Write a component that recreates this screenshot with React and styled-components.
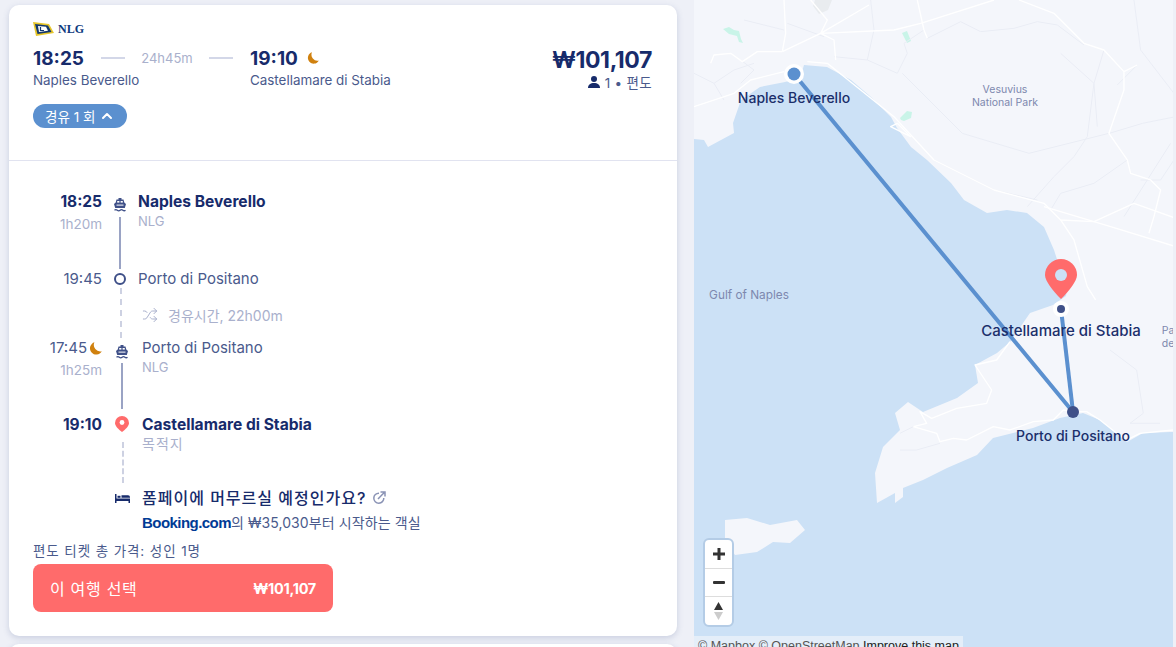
import styled, { createGlobalStyle } from "styled-components";
import { ChevronUp, Shuffle } from "lucide-react";

const GlobalStyle = createGlobalStyle`
  html, body {
    margin: 0;
    height: 100%;
    overflow: hidden;
    background: #eef0f7;
    font-family: Inter, "Noto Sans CJK KR", sans-serif;
  }
  * { box-sizing: border-box; }
`;

const Page = styled.div`
  display: flex;
  height: 647px;
  overflow: hidden;
`;
const Column = styled.div`
  width: 668px;
  margin-left: 9px;
  margin-right: 17px;
  padding-top: 5px;
  display: flex;
  flex-direction: column;
  gap: 8px;
  flex-shrink: 0;
`;
const Card = styled.div`
  background: #fff;
  border-radius: 10px;
  box-shadow: 0 2px 6px rgba(70, 85, 140, 0.22);
  flex-shrink: 0;
`;
const NextCard = styled(Card)`
  height: 60px;
`;
const Header = styled.div`
  height: 156px;
  padding: 16px 25px 0 24px;
  display: flex;
  justify-content: space-between;
  border-bottom: 1px solid #e1e3f0;
`;
const Operator = styled.div`
  display: flex;
  align-items: center;
  gap: 4px;
  height: 16px;
  color: #0d3a80;
  font: bold 12px "Liberation Serif", serif;
`;
const Route = styled.div`
  display: flex;
  margin-top: 11px;
`;
const RouteSide = styled.div`
  width: ${(p) => p.$width || "auto"};
`;
const TimeRow = styled.div`
  display: flex;
  align-items: center;
  height: 20px;
`;
const BigTime = styled.span`
  font-size: 19px;
  font-weight: 700;
  color: #172b6b;
  width: ${(p) => p.$width || "auto"};
`;
const Rule = styled.span`
  width: 24px;
  height: 2px;
  background: #d3d7e8;
`;
const Duration = styled.span`
  width: 84px;
  text-align: center;
  font-size: 13px;
  color: #a9b0cc;
`;
const Place = styled.div`
  font-size: 13.4px;
  line-height: 16px;
  margin-top: 4px;
  color: #4a5a8c;
`;
const Badge = styled.div`
  display: inline-flex;
  align-items: center;
  gap: 4px;
  height: 24px;
  margin-top: 16px;
  padding: 0 12px;
  border-radius: 12px;
  background: #5b90cf;
  color: #fff;
  font-size: 13.5px;
`;
const PriceBox = styled.div`
  margin-top: 25px;
  text-align: right;
`;
const Price = styled.div`
  font-size: 23px;
  line-height: 28px;
  font-weight: 700;
  letter-spacing: -0.4px;
  color: #172b6b;
`;
const PriceMeta = styled.div`
  display: flex;
  justify-content: flex-end;
  align-items: center;
  gap: 5px;
  height: 16px;
  font-size: 13.5px;
  letter-spacing: 0.3px;
  color: #4a5a8c;
`;
const Details = styled.div`
  padding: 31px 24px 24px;
`;
const Stop = styled.div`
  display: grid;
  grid-template-columns: 69px ${(p) => p.$rail}px 1fr;
  height: ${(p) => p.$height}px;
  padding-top: ${(p) => p.$top || 0}px;
`;
const TimeCell = styled.div`
  text-align: right;
`;
const Clock = styled.div`
  display: flex;
  justify-content: flex-end;
  align-items: center;
  gap: 2px;
  font-size: ${(p) => (p.$strong ? 15.5 : 15)}px;
  line-height: 20px;
  font-weight: ${(p) => (p.$strong ? 700 : 400)};
  color: ${(p) => (p.$strong ? "#172b6b" : "#4a5a8c")};
`;
const Leg = styled.div`
  margin-top: 3px;
  font-size: 13.5px;
  line-height: 18px;
  color: #a9b0cc;
`;
const Rail = styled.div`
  display: flex;
  flex-direction: column;
  align-items: center;
  padding-top: ${(p) => p.$top || 0}px;
`;
const Solid = styled.div`
  flex: 1;
  width: 2px;
  margin-top: ${(p) => p.$gap}px;
  background: #9aa3c4;
`;
const Dashed = styled.div`
  flex: 1;
  margin-top: ${(p) => p.$gap || 0}px;
  margin-left: 1px;
  border-left: 2px dashed #cdd1e2;
`;
const Ring = styled.div`
  width: 12px;
  height: 12px;
  border-radius: 50%;
  border: 2px solid #3f5088;
`;
const Title = styled.div`
  font-size: ${(p) => (p.$strong ? 15.6 : 15)}px;
  line-height: 20px;
  font-weight: ${(p) => (p.$strong ? 700 : 400)};
  color: ${(p) => (p.$strong ? "#172b6b" : "#4a5a8c")};
`;
const Note = styled.div`
  font-size: ${(p) => p.$size || 13}px;
  line-height: 18px;
  letter-spacing: ${(p) => p.$spacing || 0}px;
  color: #a9b0cc;
`;
const Layover = styled.div`
  display: flex;
  align-items: center;
  gap: 10px;
  height: 20px;
  margin-top: 17px;
  padding-left: 4px;
  font-size: 14px;
  color: #a9b0cc;
`;
const Hotel = styled.div`
  display: grid;
  grid-template-columns: 69px 40px 1fr;
  margin-top: 5px;
`;
const BedCell = styled.div`
  display: flex;
  justify-content: center;
  padding-top: 6px;
`;
const HotelTitle = styled.div`
  display: flex;
  align-items: center;
  gap: 6px;
  font-size: 16px;
  line-height: 20px;
  font-weight: 500;
  letter-spacing: 1px;
  color: #172b6b;
`;
const HotelOffer = styled.div`
  display: flex;
  align-items: center;
  height: 20px;
  margin-top: 4px;
  font-size: 14px;
  letter-spacing: 0.1px;
  color: #4a5a8c;
`;
const Booking = styled.span`
  font: bold 15px "Liberation Sans", sans-serif;
  letter-spacing: -0.55px;
  color: #003b95;
`;
const Total = styled.div`
  margin-top: 11px;
  font-size: 13.5px;
  line-height: 16px;
  letter-spacing: 0.9px;
  color: #4a5a8c;
`;
const SelectButton = styled.button`
  display: flex;
  justify-content: space-between;
  align-items: center;
  width: 300px;
  height: 48px;
  margin-top: 5px;
  padding: 0 17px;
  border: 0;
  border-radius: 8px;
  background: #ff6b6b;
  color: #fff;
  font-family: inherit;
  font-size: 16px;
  letter-spacing: 0.7px;
`;
const ButtonPrice = styled.span`
  font-size: 14.5px;
  font-weight: 700;
  letter-spacing: -0.3px;
`;

const MapArea = styled.div`
  position: relative;
  width: 479px;
  height: 647px;
  overflow: hidden;
  background: #cce1f6;
  flex-shrink: 0;
`;
const MapSvg = styled.svg`
  display: block;
`;
const MapLabel = styled.div`
  position: absolute;
  left: ${(p) => p.$x - 694}px;
  top: ${(p) => p.$y}px;
  transform: translate(-50%, -50%);
  white-space: nowrap;
  text-align: center;
  font-size: ${(p) => p.$size || 14}px;
  line-height: ${(p) => (p.$minor ? 13 : 18)}px;
  font-weight: ${(p) => (p.$minor ? 400 : 500)};
  color: ${(p) => (p.$minor ? "#7d88ae" : "#1b2f6b")};
`;
const Controls = styled.div`
  position: absolute;
  left: 9px;
  top: 538px;
  width: 31px;
  height: 89px;
  border: 2px solid #b4cce6;
  border-radius: 6px;
  background: #fff;
  display: flex;
  flex-direction: column;
`;
const ControlButton = styled.div`
  flex: 1;
  display: flex;
  align-items: center;
  justify-content: center;
  & + & {
    border-top: 1px solid #ddd;
  }
`;
const Attribution = styled.div`
  position: absolute;
  left: 0;
  top: 636px;
  width: 269px;
  height: 20px;
  padding: 0 4px;
  background: #e4eef9;
  font: 12.5px/20px "Liberation Sans", sans-serif;
  color: #555;
  white-space: nowrap;
`;
const Improve = styled.span`
  color: #222;
`;

const Moon = ({ size = 12 }) => (
  <svg width={size} height={size} viewBox="0 0 12 12">
    <path d="M5 0.3A5.8 5.8 0 1 0 11.8 8.6 6 6 0 0 1 5 0.3z" fill="#d0810f" />
  </svg>
);

const Ferry = ({ color = "#3f5088" }) => (
  <svg width="12" height="14" viewBox="0 0 12 14">
    <path d="M4.5 0h3v1.5H9.5l.8 3L12 6 10.8 10H1.2L0 6l1.7-1.5.8-3h2z" fill={color} />
    <rect x="3.2" y="3" width="2.2" height="1.6" fill="#fff" />
    <rect x="6.6" y="3" width="2.2" height="1.6" fill="#fff" />
    <rect x="2.5" y="6.6" width="7" height="1" fill="#fff" />
    <path d="M0.5 12.2q1.4-1.2 2.8 0t2.8 0 2.8 0 2.6 0" fill="none" stroke={color} strokeWidth="1.3" />
  </svg>
);

const Pin = () => (
  <svg width="14" height="16" viewBox="0 0 14 16">
    <path d="M7 0a7 7 0 0 1 7 7c0 3-3.5 6.5-7 9-3.500-2.500-7-6-7-9a7 7 0 0 1 7-7z" fill="#ff6b6b" />
    <circle cx="7" cy="6.500" r="2.400" fill="#fff" />
  </svg>
);

const Person = () => (
  <svg width="12" height="12" viewBox="0 0 12 12">
    <circle cx="6" cy="3" r="3" fill="#172b6b" />
    <path d="M0 12c0-3.500 2.500-5 6-5s6 1.500 6 5z" fill="#172b6b" />
  </svg>
);

const Bed = () => (
  <svg width="15" height="9" viewBox="0 0 15 9">
    <path d="M0 0h1.500v4.500H15V9h-1.500V7H1.500v2H0z" fill="#172b6b" />
    <rect x="2.500" y="1.800" width="3" height="2" fill="#172b6b" />
    <path d="M6.500 1.300H13a2 2 0 0 1 2 2v.5H6.500z" fill="#172b6b" />
  </svg>
);

const ExternalLink = () => (
  <svg width="14" height="14" viewBox="0 0 14 14" fill="none" stroke="#8a93b5" strokeWidth="1.500">
    <path d="M7 2.200A5 5 0 1 0 11.800 7" />
    <path d="M6 8l6-6.200M8.500 1h4.500v4.500" />
  </svg>
);

const Flag = () => (
  <svg width="21" height="16" viewBox="0 0 21 16">
    <path d="M0 1l16 2 5 9-18 3z" fill="#e7c62a" />
    <path d="M2 3l13 1.500 3.500 6.500-14 2z" fill="#12386f" />
    <path d="M5 5l8 .8 2 4-9 1.200z" fill="#fff" />
    <path d="M7.500 6v3.500h3.500" fill="none" stroke="#12386f" strokeWidth="1.200" />
  </svg>
);

const roads = "#ffffff";
const thin = "#eaedf5";

const RouteMap = () => (
  <MapSvg width="479" height="647" viewBox="694 0 479 647">
    <path
      fill="#f4f6fb"
      d="M694 0H1176V432L1170 432 1143 433 1127 442 1100 420 1083 413 1060 418 1033 428 993 438 977 455 947 468 923 480 903 488 903 497 895 503 895 493 877 503 875 473 883 447 900 430 895 413 908 402 923 412 957 398 978 383 975 365 997 353 1010 342 1030 313 1053 305 1066 296 1067 290 1054 250 1044 227 1027 213 1007 210 987 213 964 200 951 183 927 160 911 147 897 128 891 117 871 97 851 80 827 67 804 65 800 78 785 82 760 87 741 100 733 123 734 133 708 147 704 140 694 139z"
    />
    <path
      fill="#f4f6fb"
      d="M725 520L747 518 770 525 797 520 805 530 790 543 773 542 757 552 735 555 725 540z"
    />
    <g fill="#c9f4e8">
      <path d="M723 29l6-2 5 3 5 1 2 8 2 4-4-1-2-6-8-2z" />
      <path d="M902 33l5-2 4 10-4 2z" />
      <path d="M900 118l7-7 5 1-1 6-7 3-3-1z" />
    </g>
    <path d="M815 0l17 0-4 10-9 4-6-8z" fill="#e9ecef" />
    <g transform="translate(694 0) scale(0.3333)" fill="none" stroke={thin} strokeWidth="3">
      <path d="M0 220l60 30 60-40 60-20M60 250l30 50M140 180l40 30-40 40M280 70l110 40M150 60l120 30M420 170l100 10 20-90-10-90M520 180l90 40 30-60-10-30 60-40" />
      <path d="M700 115l100-50 60 30 100-10 70-20 60 10 80 60M1100 160l100 90-20 160-40 60-60 60-80 90M1330 195l-60 60M1320 0l20 150 100 130M1300 480l-100 70-100 30-30 50M1230 150l-30 100 10 130M1245 400l-240 60-200-60-180-180M720 480l180 90 130 30" />
      <path d="M1290 650l140-220M1446 350l-100 20-100 30M1340 540l60 0 40-60" />
    </g>
    <g transform="translate(694 0) scale(0.3333)" fill="none" stroke={roads} strokeWidth="4" strokeLinejoin="round">
      <path d="M0 320L120 280 170 240 270 215" />
      <path d="M340 185L400 190 500 270 600 350 720 480 900 570 1050 610 1100 660 1200 665 1320 610 1446 655" />
      <path d="M270 0L275 100 265 155M350 0L400 60 380 100 265 155M380 100L525 15M380 100L600 90 680 70 900 0" />
      <path d="M670 0L690 90 700 115M975 0L1080 40 1170 130 1230 150 1290 215 1290 270 1245 400 1300 480 1310 520 1370 540 1400 570 1380 650 1365 700M1290 215L1330 195" />
      <path d="M50 190L60 165 110 160 145 185 190 155 265 155M380 100L420 120 425 180M610 370L650 410 590 380z" />
      <path d="M1100 660L1140 720 1180 860 1205 900M1250 680L1446 740M1050 620L1250 680" />
    </g>
    <g transform="translate(860 340) scale(0.3333)" fill="none" stroke={roads} strokeWidth="4" strokeLinejoin="round">
      <path d="M450 5L410 60 345 75 395 150 380 190 290 205 215 235 180 215 200 250 160 260 230 280 240 305 280 295 320 300 400 260 450 270 520 245 580 240 610 210 640 215 680 215 720 240 770 280 800 300 840 280 940 270" />
    </g>
    <g transform="translate(860 340) scale(0.3333)" fill="none" stroke={thin} strokeWidth="3">
      <path d="M120 330l50 0 70-20M750 30l80 60 20 130-40 30 90 0M120 280l40-20" />
    </g>
    <g stroke="#5b90cf" strokeWidth="4" strokeLinecap="round">
      <line x1="794" y1="74" x2="1073" y2="412" />
      <line x1="1073" y1="412" x2="1061" y2="309" />
    </g>
    <circle cx="794" cy="74" r="10" fill="#fff" />
    <circle cx="794" cy="74" r="6.500" fill="#5b90cf" />
    <circle cx="1061" cy="309" r="8" fill="#fff" />
    <circle cx="1061" cy="309" r="4" fill="#3f5088" />
    <circle cx="1073" cy="412" r="6" fill="#3f5088" />
    <path
      d="M1061 259a16 16 0 0 1 16 16c0 6-8 16-16 24-8-8-16-18-16-24a16 16 0 0 1 16-16z"
      fill="#ff6b6b"
    />
    <circle cx="1061" cy="275" r="6" fill="#cce1f6" />
  </MapSvg>
);

export default function App() {
  return (
    <Page>
      <GlobalStyle />
      <Column>
        <Card>
          <Header>
            <div>
              <Operator>
                <Flag /> NLG
              </Operator>
              <Route>
                <RouteSide $width="217px">
                  <TimeRow>
                    <BigTime $width="68px">18:25</BigTime>
                    <Rule />
                    <Duration>24h45m</Duration>
                    <Rule />
                  </TimeRow>
                  <Place>Naples Beverello</Place>
                </RouteSide>
                <RouteSide>
                  <TimeRow>
                    <BigTime>19:10</BigTime>
                    &nbsp;&nbsp;
                    <Moon />
                  </TimeRow>
                  <Place>Castellamare di Stabia</Place>
                </RouteSide>
              </Route>
              <Badge>
                경유 1 회 <ChevronUp size={16} strokeWidth={3} />
              </Badge>
            </div>
            <PriceBox>
              <Price>₩101,107</Price>
              <PriceMeta>
                <Person /> 1 • 편도
              </PriceMeta>
            </PriceBox>
          </Header>
          <Details>
            <Stop $rail={36} $height={77}>
              <TimeCell>
                <Clock $strong>18:25</Clock>
                <Leg>1h20m</Leg>
              </TimeCell>
              <Rail $top={6}>
                <Ferry />
                <Solid $gap={5} />
              </Rail>
              <div>
                <Title $strong>Naples Beverello</Title>
                <Note>NLG</Note>
              </div>
            </Stop>
            <Stop $rail={36} $height={19}>
              <TimeCell>
                <Clock>19:45</Clock>
              </TimeCell>
              <Rail $top={4}>
                <Ring />
              </Rail>
              <Title>Porto di Positano</Title>
            </Stop>
            <Stop $rail={36} $height={50}>
              <div />
              <Rail>
                <Dashed />
              </Rail>
              <Layover>
                <Shuffle size={16} strokeWidth={1.5} />
                경유시간, 22h00m
              </Layover>
            </Stop>
            <Stop $rail={40} $height={71}>
              <TimeCell>
                <Clock>
                  17:45 <Moon size={13} />
                </Clock>
                <Leg>1h25m</Leg>
              </TimeCell>
              <Rail $top={7}>
                <Ferry />
                <Solid $gap={4} />
              </Rail>
              <div>
                <Title>Porto di Positano</Title>
                <Note>NLG</Note>
              </div>
            </Stop>
            <Stop $rail={40} $height={74} $top={6}>
              <TimeCell>
                <Clock $strong>19:10</Clock>
              </TimeCell>
              <Rail $top={1}>
                <Pin />
                <Dashed $gap={10} />
              </Rail>
              <div>
                <Title $strong>Castellamare di Stabia</Title>
                <Note $size={14} $spacing={1}>목적지</Note>
              </div>
            </Stop>
            <Hotel>
              <div />
              <BedCell>
                <Bed />
              </BedCell>
              <div>
                <HotelTitle>
                  폼페이에 머무르실 예정인가요? <ExternalLink />
                </HotelTitle>
                <HotelOffer>
                  <Booking>Booking.com</Booking>의 ₩35,030부터 시작하는 객실
                </HotelOffer>
              </div>
            </Hotel>
            <Total>편도 티켓 총 가격: 성인 1명</Total>
            <SelectButton>
              이 여행 선택
              <ButtonPrice>₩101,107</ButtonPrice>
            </SelectButton>
          </Details>
        </Card>
        <NextCard />
      </Column>
      <MapArea>
        <RouteMap />
        <MapLabel $x={794} $y={98}>Naples Beverello</MapLabel>
        <MapLabel $size={15} $x={1061} $y={331}>Castellamare di Stabia</MapLabel>
        <MapLabel $x={1073} $y={436}>Porto di Positano</MapLabel>
        <MapLabel $minor $size={10.5} $x={1005} $y={96}>
          Vesuvius
          <br />
          National Park
        </MapLabel>
        <MapLabel $minor $size={11.8} $x={749} $y={295}>Gulf of Naples</MapLabel>
        <MapLabel $minor $size={10.5} $x={1168} $y={337}>
          Pa
          <br />
          de
        </MapLabel>
        <Controls>
          <ControlButton>
            <svg width="12" height="12" viewBox="0 0 12 12">
              <path d="M4.500 0h3v4.500H12v3H7.500V12h-3V7.500H0v-3h4.500z" fill="#333" />
            </svg>
          </ControlButton>
          <ControlButton>
            <svg width="12" height="3" viewBox="0 0 12 3">
              <rect width="12" height="3" rx="1" fill="#333" />
            </svg>
          </ControlButton>
          <ControlButton>
            <svg width="9" height="18" viewBox="0 0 9 18">
              <path d="M4.500 0L9 8H0z" fill="#333" />
              <path d="M4.500 18L9 10H0z" fill="#ccc" />
            </svg>
          </ControlButton>
        </Controls>
        <Attribution>
          © Mapbox © OpenStreetMap <Improve>Improve this map</Improve>
        </Attribution>
      </MapArea>
    </Page>
  );
}
